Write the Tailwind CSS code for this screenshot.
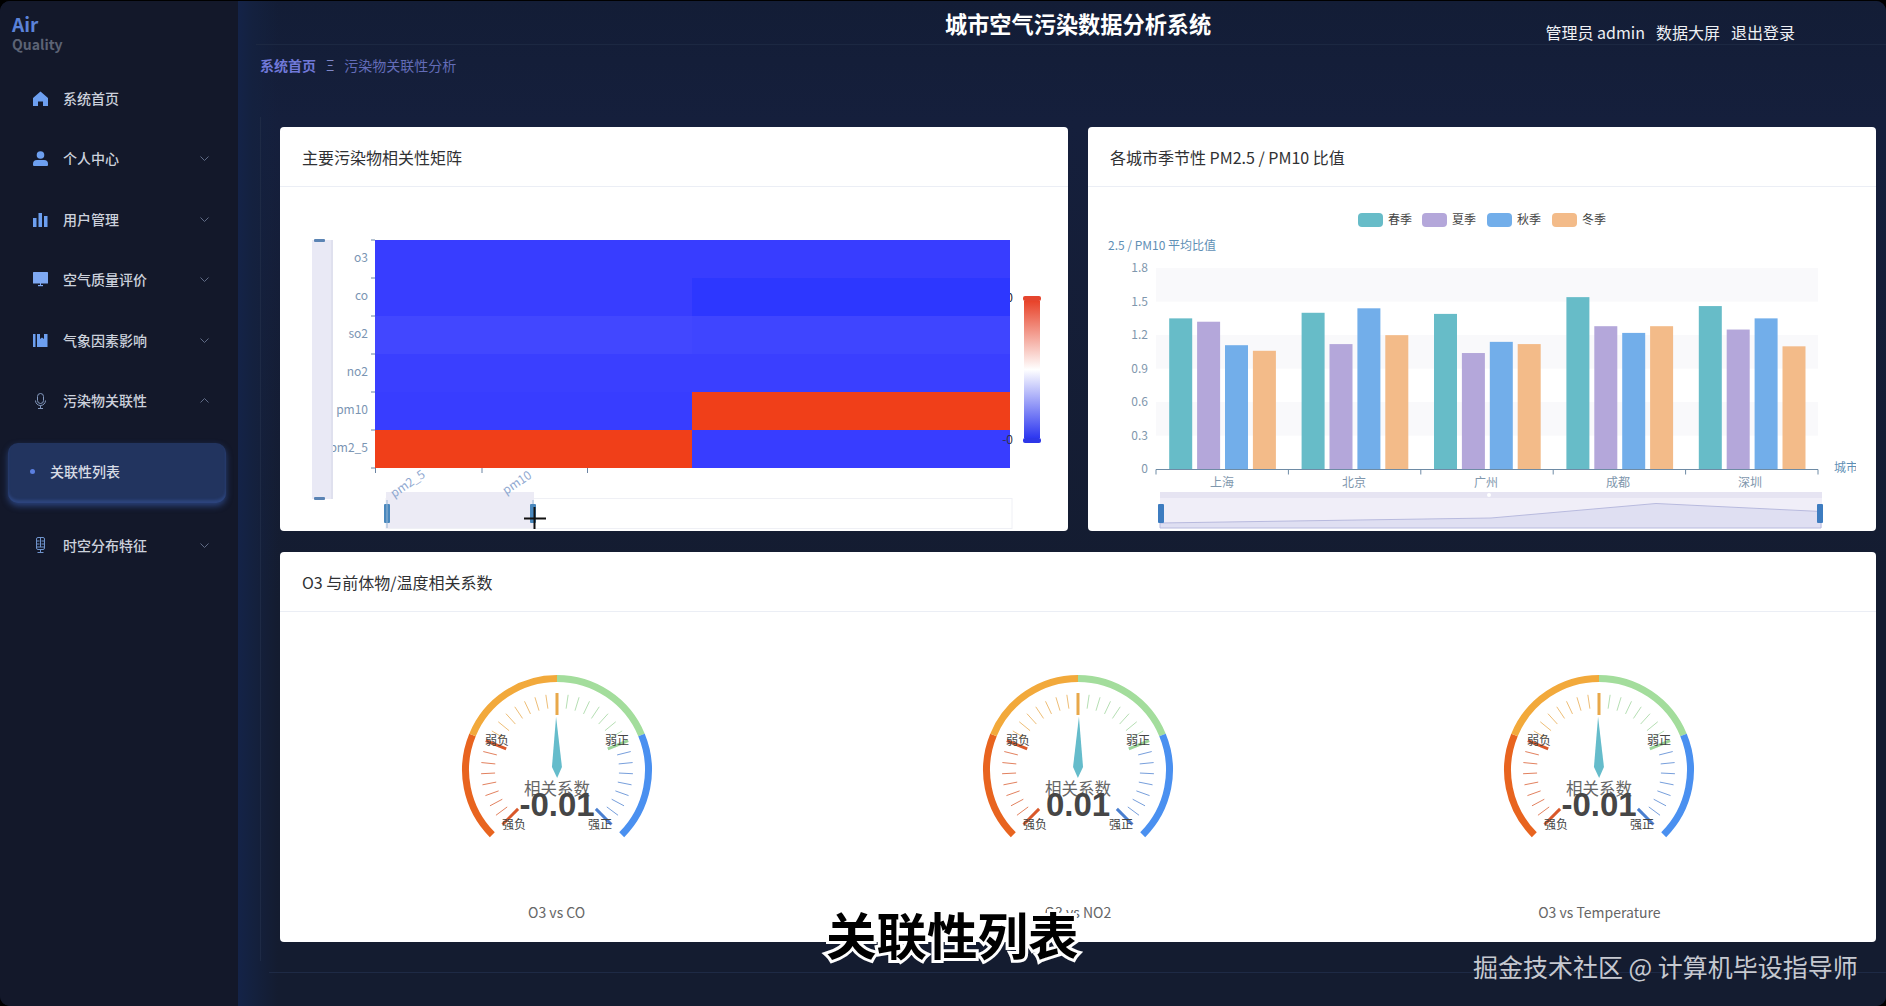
<!DOCTYPE html>
<html lang="zh-CN">
<head>
<meta charset="utf-8">
<title>城市空气污染数据分析系统</title>
<script src="https://cdn.jsdelivr.net/npm/@tailwindcss/browser@4"></script>
</head>
<body class="bg-black overflow-hidden font-['Noto_Sans_CJK_SC','Noto_Sans',sans-serif]">
<div class="relative mt-px w-[1886px] h-[1005px] flex rounded-[10px] overflow-hidden bg-[#141c30]">

  <!-- Sidebar -->
  <aside class="w-[238px] shrink-0 bg-[#13182a] text-[#ccd1dc] text-[14px] font-medium">
    <div class="h-[67px] pl-[12px] pt-[13px] font-bold leading-[20px]">
      <div class="text-[#5b82d8] text-[19px]">Air</div>
      <div class="text-[#5c6375] text-[14px]">Quality</div>
    </div>
    <nav>
      <div class="h-[60.500px] flex items-center pl-[33px] gap-[15px]">
        <svg class="w-[15px] h-[15px] text-[#6d9ff0]" viewBox="0 0 15 15" fill="currentColor"><path d="M7.500.5 15 7v8h-5V10.500H5V15H0V7z"/></svg>
        <span class="flex-1">系统首页</span>
      </div>
      <div class="h-[60.500px] flex items-center pl-[33px] gap-[15px] pr-[29px]">
        <svg class="w-[15px] h-[15px] text-[#6d9ff0]" viewBox="0 0 15 15" fill="currentColor"><circle cx="7.500" cy="4" r="3.800"/><path d="M1 15q-1 0-1-1v-1q0-4 4-4h7q4 0 4 4v1q0 1-1 1z"/></svg>
        <span class="flex-1">个人中心</span>
        <svg class="w-[9px] h-[5px] text-[#5f6a85]" viewBox="0 0 9 5" fill="none" stroke="currentColor"><path d="M.5.500 4.500 4.500 8.500.5"/></svg>
      </div>
      <div class="h-[60.500px] flex items-center pl-[33px] gap-[15px] pr-[29px]">
        <svg class="w-[15px] h-[15px] text-[#6d9ff0]" viewBox="0 0 15 15" fill="currentColor"><rect x="0" y="6" width="3.500" height="9"/><rect x="5.500" y="1" width="3.500" height="14"/><rect x="11" y="4" width="3.500" height="11"/></svg>
        <span class="flex-1">用户管理</span>
        <svg class="w-[9px] h-[5px] text-[#5f6a85]" viewBox="0 0 9 5" fill="none" stroke="currentColor"><path d="M.5.500 4.500 4.500 8.500.5"/></svg>
      </div>
      <div class="h-[60.500px] flex items-center pl-[33px] gap-[15px] pr-[29px]">
        <svg class="w-[15px] h-[15px] text-[#7ea8f2]" viewBox="0 0 15 15" fill="currentColor"><rect x="0" y="0" width="15" height="11.500" rx=".5"/><rect x="5" y="13" width="5" height="1.200"/><rect x="7" y="11" width="1" height="2"/></svg>
        <span class="flex-1">空气质量评价</span>
        <svg class="w-[9px] h-[5px] text-[#5f6a85]" viewBox="0 0 9 5" fill="none" stroke="currentColor"><path d="M.5.500 4.500 4.500 8.500.5"/></svg>
      </div>
      <div class="h-[60.500px] flex items-center pl-[33px] gap-[15px] pr-[29px]">
        <svg class="w-[15px] h-[15px] text-[#6d9ff0]" viewBox="0 0 15 15" fill="currentColor"><rect x="0" y="1" width="2.500" height="13"/><path d="M4 1h3v5l2-1.500L11 6V1h3.500v13H4z"/></svg>
        <span class="flex-1">气象因素影响</span>
        <svg class="w-[9px] h-[5px] text-[#5f6a85]" viewBox="0 0 9 5" fill="none" stroke="currentColor"><path d="M.5.500 4.500 4.500 8.500.5"/></svg>
      </div>
      <div class="h-[60.500px] flex items-center pl-[33px] gap-[15px] pr-[29px]">
        <svg class="w-[15px] h-[16px] text-[#8398bd]" viewBox="0 0 15 16" fill="none" stroke="currentColor"><rect x="4.500" y=".5" width="6" height="10" rx="3"/><path d="M2.500 7.500a5 5 0 0 0 10 0M7.500 12.500v3M5 15.500h5"/></svg>
        <span class="flex-1">污染物关联性</span>
        <svg class="w-[9px] h-[5px] text-[#5f6a85]" viewBox="0 0 9 5" fill="none" stroke="currentColor"><path d="M.5 4.500 4.500.5 8.500 4.500"/></svg>
      </div>
      <div class="mx-[8px] mt-[12px] mb-[12px] h-[60px] w-[218px] rounded-[10px] bg-[#22345f] shadow-[0_3px_6px_rgba(60,100,190,0.55),inset_0_-3px_3px_rgba(70,110,200,0.3)] flex items-center pl-[22px] pb-[3px] gap-[15px] text-[#d8dce6]">
        <span class="w-[5px] h-[5px] rounded-full bg-[#5b7fe0]"></span>
        <span>关联性列表</span>
      </div>
      <div class="h-[60.500px] flex items-center pl-[33px] gap-[15px] pr-[29px]">
        <svg class="w-[15px] h-[16px] text-[#6f93cc]" viewBox="0 0 15 16" fill="none" stroke="currentColor"><rect x="3.500" y=".5" width="8" height="12" rx="1.500"/><path d="M3.500 4h3M8.500 4h3M3.500 7h3M8.500 7h3M3.500 10h8M7.500 1v9M7.500 12.500v3M4.500 15.500h6"/></svg>
        <span class="flex-1">时空分布特征</span>
        <svg class="w-[9px] h-[5px] text-[#5f6a85]" viewBox="0 0 9 5" fill="none" stroke="currentColor"><path d="M.5.500 4.500 4.500 8.500.5"/></svg>
      </div>
    </nav>
  </aside>

  <!-- Main -->
  <main class="flex-1 flex flex-col bg-[linear-gradient(90deg,#142348_0px,#14213f_14px,transparent_40px),linear-gradient(180deg,#131d36_0px,#151f3c_120px,#141c30_600px)]">
    <header class="relative h-[44px] flex items-center justify-end border-b border-[#1c2842] ml-[18px] pr-[91px] text-[16px] text-[#eef0f4] gap-[11px]">
      <h1 class="absolute left-[689px] top-[7px] text-[22.200px] leading-[30px] font-bold text-white whitespace-nowrap">城市空气污染数据分析系统</h1>
      <span class="mt-[18px]">管理员 admin</span>
      <span class="mt-[18px]">数据大屏</span>
      <span class="mt-[18px]">退出登录</span>
    </header>
    <div class="h-[40px] flex items-center pl-[22px] text-[14px] text-[#636cb8]">
      <span class="font-bold text-[#7078d8]">系统首页</span>
      <span class="mx-[10px] text-[#8088c8]">Ξ</span>
      <span>污染物关联性分析</span>
    </div>
    <div class="ml-[22px] mt-[32px] h-[844px] border-l border-[#1e2a45] pl-[19px] pr-[10px] pt-[10px]">
      <div class="grid grid-cols-2 gap-x-[20px] gap-y-[21px]">

        <!-- Heatmap card -->
        <section class="bg-white rounded-[4px] h-[404px] overflow-hidden">
          <h2 class="h-[60px] flex items-center pl-[22px] text-[16px] text-[#303133] border-b border-[#ebeef5]">主要污染物相关性矩阵</h2>
          <svg class="block w-full h-[344px]" viewBox="280 187 788 344" font-size="12" fill="#7b95b3">
            <text x="1013" y="302" text-anchor="end" fill="#223">0</text>
            <g shape-rendering="crispEdges">
              <rect x="375" y="240" width="317" height="38" fill="#383dff"/>
              <rect x="692" y="240" width="318" height="38" fill="#383dff"/>
              <rect x="375" y="278" width="317" height="38" fill="#383dff"/>
              <rect x="692" y="278" width="318" height="38" fill="#2d37ff"/>
              <rect x="375" y="316" width="317" height="38" fill="#4247ff"/>
              <rect x="692" y="316" width="318" height="38" fill="#3f45ff"/>
              <rect x="375" y="354" width="635" height="38" fill="#3a3fff"/>
              <rect x="375" y="392" width="317" height="38" fill="#383dff"/>
              <rect x="692" y="392" width="318" height="38" fill="#f03f19"/>
              <rect x="375" y="430" width="317" height="38" fill="#f03f19"/>
              <rect x="692" y="430" width="318" height="38" fill="#383dff"/>
            </g>
            <path d="M371 240h4M371 278h4M371 316h4M371 354h4M371 392h4M371 430h4M371 468h4M375.500 468v5M482 468v5M587.500 468v5" stroke="#6b84a3" fill="none"/>
            <g text-anchor="end">
              <text x="368" y="262">o3</text>
              <text x="368" y="300">co</text>
              <text x="368" y="338">so2</text>
              <text x="368" y="376">no2</text>
              <text x="368" y="414">pm10</text>
              <text x="368" y="452">pm2_5</text>
            </g>
            <!-- y slider -->
            <rect x="312" y="240" width="21" height="259" fill="#e9e9f5"/>
            <rect x="331" y="240" width="2" height="259" fill="#dfe0ee"/>
            <rect x="314" y="239" width="11" height="3" rx="1" fill="#5b84b4"/>
            <rect x="314" y="497" width="11" height="3" rx="1" fill="#5b84b4"/>
            <!-- x slider -->
            <rect x="386" y="498.500" width="626" height="30" fill="#fff" stroke="#eff0f5"/>
            <rect x="386" y="492" width="148" height="36" fill="#ecebf5"/>
            <text transform="translate(394 498) rotate(-34)" fill="#8fa8d0">pm2_5</text>
            <text transform="translate(506 495) rotate(-34)" fill="#8fa8d0">pm10</text>
            <rect x="384" y="504" width="6" height="19" rx="1" fill="#4a88bd"/>
            <rect x="530" y="504" width="6" height="19" rx="1" fill="#4a88bd"/>
            <path d="M387 500v28M533 500v4" stroke="#9bb8d4"/>
            <!-- visual map -->
            <defs>
              <linearGradient id="vm" x1="0" y1="0" x2="0" y2="1">
                <stop offset="0" stop-color="#e8432a"/>
                <stop offset=".5" stop-color="#ffffff"/>
                <stop offset="1" stop-color="#2d37f0"/>
              </linearGradient>
            </defs>
            <rect x="1024" y="301" width="16" height="137" fill="url(#vm)"/>
            <rect x="1023" y="296" width="18" height="5" rx="2" fill="#e5452e"/>
            <rect x="1023" y="438" width="18" height="5" rx="2" fill="#2d37e8"/>
            <text x="1013" y="444" text-anchor="end" fill="#334">-0</text>
            <!-- crosshair cursor -->
            <path d="M524 518.500h22M534.500 507v22" stroke="#111" stroke-width="2"/>
          </svg>
        </section>

        <!-- Bar chart card -->
        <section class="bg-white rounded-[4px] h-[404px] overflow-hidden">
          <h2 class="h-[60px] flex items-center pl-[22px] text-[16px] text-[#303133] border-b border-[#ebeef5]">各城市季节性 PM2.5 / PM10 比值</h2>
          <svg id="bars" class="block w-full h-[344px]" viewBox="1088 187 788 344" font-size="12" fill="#6b88a5">
            <rect x="1156" y="268" width="662" height="33.600" fill="#f9f9fb"/>
            <rect x="1156" y="335" width="662" height="33.600" fill="#f9f9fb"/>
            <rect x="1156" y="402" width="662" height="33.600" fill="#f9f9fb"/>
            <g id="barg"></g>
            <path d="M1156 469.500h662M1156 469.500v5M1288.400 469.500v5M1420.800 469.500v5M1553.200 469.500v5M1685.600 469.500v5M1818 469.500v5" stroke="#6e8ba5" fill="none"/>
            <g text-anchor="end" fill="#7f97ad">
              <text x="1148" y="272">1.8</text>
              <text x="1148" y="306">1.5</text>
              <text x="1148" y="339">1.2</text>
              <text x="1148" y="373">0.9</text>
              <text x="1148" y="406">0.6</text>
              <text x="1148" y="440">0.3</text>
              <text x="1148" y="473">0</text>
            </g>
            <g text-anchor="middle" fill="#7f97ad">
              <text x="1222" y="487">上海</text>
              <text x="1354" y="487">北京</text>
              <text x="1486" y="487">广州</text>
              <text x="1618" y="487">成都</text>
              <text x="1750" y="487">深圳</text>
            </g>
            <text x="1108" y="250" fill="#5f8fb5">2.5 / PM10 平均比值</text>
            <svg x="1834" y="455" width="22" height="24" viewBox="1834 455 22 24"><text x="1834" y="472" fill="#5f8fb5">城市</text></svg>
            <g fill="#444">
              <rect x="1358" y="213" width="25" height="14" rx="4" fill="#67bcc8"/><text x="1388" y="224">春季</text>
              <rect x="1422" y="213" width="25" height="14" rx="4" fill="#b4a7da"/><text x="1452" y="224">夏季</text>
              <rect x="1487" y="213" width="25" height="14" rx="4" fill="#72aeea"/><text x="1517" y="224">秋季</text>
              <rect x="1552" y="213" width="25" height="14" rx="4" fill="#f3bb89"/><text x="1582" y="224">冬季</text>
            </g>
            <!-- x slider -->
            <rect x="1160" y="492" width="662" height="36" fill="#f0eef8"/>
            <rect x="1160" y="492" width="662" height="6" fill="#e6e4f2"/>
            <path d="M1160 523 1491 518 1656 503.500 1821 511.500V528H1160z" fill="#dfdff2" stroke="#b8bade"/>
            <circle cx="1489" cy="495" r="2" fill="#fff"/>
            <rect x="1158" y="504" width="6" height="19" rx="1" fill="#3d7cc0"/>
            <rect x="1817" y="504" width="6" height="19" rx="1" fill="#3d7cc0"/>
          </svg>
        </section>

        <!-- Gauges card -->
        <section class="col-span-2 bg-white rounded-[4px] h-[390px] overflow-hidden">
          <h2 class="h-[60px] flex items-center pl-[22px] text-[16px] text-[#303133] border-b border-[#ebeef5]">O3 与前体物/温度相关系数</h2>
          <svg class="absolute w-0 h-0">
            <defs>
              <g id="gauge">
                <g fill="none" stroke-width="7">
                  <path d="M55.300 174.700A91.500 91.500 0 0 1 35.500 75" stroke="#e8641f"/>
                  <path d="M35.500 75A91.500 91.500 0 0 1 120 18.500" stroke="#f2a93b"/>
                  <path d="M120 18.500A91.500 91.500 0 0 1 204.500 75" stroke="#a3dd9c"/>
                  <path d="M204.500 75A91.500 91.500 0 0 1 184.700 174.700" stroke="#4a90f0"/>
                </g>
                <g id="ticks"></g>
                <g font-size="12" fill="#444" text-anchor="middle">
                  <text x="60" y="84.500">弱负</text>
                  <text x="180" y="84.500">弱正</text>
                  <text x="77" y="168.500">强负</text>
                  <text x="163" y="168.500">强正</text>
                </g>
              </g>
            </defs>
          </svg>
          <div class="grid grid-cols-3 px-[16px] pt-[48px] text-center text-[14px] text-[#666]">
            <div class="flex flex-col items-center">
              <svg class="w-[240px] h-[190px]" viewBox="0 0 240 190">
                <use href="#gauge"/>
                <polygon points="120,56.700 125,107 120,118 115,107" fill="#65bccb" transform="rotate(-1 120 110)"/>
                <text x="120" y="134.500" text-anchor="middle" font-size="16.500" fill="#666">相关系数</text>
                <text x="120" y="156" text-anchor="middle" font-size="33" font-weight="700" font-family="Liberation Sans" fill="#464646">-0.01</text>
              </svg>
              <div class="mt-[52px] leading-[20px]">O3 vs CO</div>
            </div>
            <div class="flex flex-col items-center">
              <svg class="w-[240px] h-[190px]" viewBox="0 0 240 190">
                <use href="#gauge"/>
                <polygon points="120,56.700 125,107 120,118 115,107" fill="#65bccb" transform="rotate(1 120 110)"/>
                <text x="120" y="134.500" text-anchor="middle" font-size="16.500" fill="#666">相关系数</text>
                <text x="120" y="156" text-anchor="middle" font-size="33" font-weight="700" font-family="Liberation Sans" fill="#464646">0.01</text>
              </svg>
              <div class="mt-[52px] leading-[20px]">O3 vs NO2</div>
            </div>
            <div class="flex flex-col items-center">
              <svg class="w-[240px] h-[190px]" viewBox="0 0 240 190">
                <use href="#gauge"/>
                <polygon points="120,56.700 125,107 120,118 115,107" fill="#65bccb" transform="rotate(-1 120 110)"/>
                <text x="120" y="134.500" text-anchor="middle" font-size="16.500" fill="#666">相关系数</text>
                <text x="120" y="156" text-anchor="middle" font-size="33" font-weight="700" font-family="Liberation Sans" fill="#464646">-0.01</text>
              </svg>
              <div class="mt-[52px] leading-[20px]">O3 vs Temperature</div>
            </div>
          </div>
        </section>
      </div>
    </div>
    <div class="ml-[31px] mt-[11px] h-px bg-[#1e2a45]"></div>
  </main>

  <!-- Video caption + watermark overlays -->
  <div class="absolute left-[826px] top-[902px] text-[50.500px] leading-[60px] font-bold text-black whitespace-nowrap [-webkit-text-stroke:6px_white] [paint-order:stroke_fill]">关联性列表</div>
  <div class="absolute left-[1473px] top-[947px] text-[25px] leading-[36px] text-[#c6c9d0] whitespace-nowrap">掘金技术社区 @ 计算机毕设指导师</div>
</div>

<script>
  var NS = 'http://www.w3.org/2000/svg';
  function el(parent, name, attrs) {
    var n = document.createElementNS(NS, name);
    for (var k in attrs) n.setAttribute(k, attrs[k]);
    parent.appendChild(n);
  }
  // gauge ticks
  var ticks = document.getElementById('ticks');
  var cols = ['#d9582a', '#e8a84a', '#9dd49a', '#4a7fd0'];
  for (var i = 0; i <= 32; i++) {
    var a = (225 - i * 270 / 32) * Math.PI / 180;
    var major = i % 8 === 0;
    var sec = i === 0 ? 0 : Math.ceil(i / 8) - 1;
    var r1 = major ? 55 : 62, r2 = major ? 77 : 76;
    el(ticks, 'line', {
      x1: 120 + r1 * Math.cos(a), y1: 110 - r1 * Math.sin(a),
      x2: 120 + r2 * Math.cos(a), y2: 110 - r2 * Math.sin(a),
      stroke: cols[sec], 'stroke-width': major ? 3 : 1, opacity: major ? 1 : 0.75
    });
  }
  // bars
  var data = [[1.35,1.32,1.11,1.06],[1.40,1.12,1.44,1.20],[1.39,1.04,1.14,1.12],[1.54,1.28,1.22,1.28],[1.46,1.25,1.35,1.10]];
  var barCols = ['#67bcc8', '#b4a7da', '#72aeea', '#f3bb89'];
  var g = document.getElementById('barg');
  data.forEach(function (row, c) {
    row.forEach(function (v, s) {
      var h = v * 111.8;
      el(g, 'rect', { x: 1169.2 + c * 132.4 + s * 27.9, y: 469.3 - h, width: 23, height: h, fill: barCols[s] });
    });
  });
</script>
</body>
</html>
